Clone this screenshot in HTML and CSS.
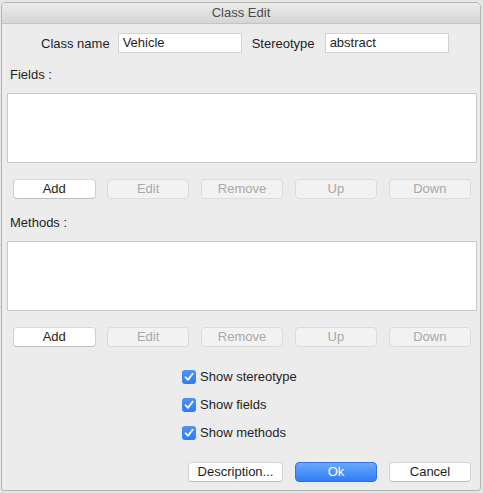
FILE: index.html
```html
<!DOCTYPE html>
<html>
<head>
<meta charset="utf-8">
<link rel="stylesheet" href="styles.css">
</head>
<body>
<div class="window">
  <div class="titlebar">Class Edit</div>
  <div class="content">
    <div class="name-row">
      <span class="lbl">Class name</span>
      <div class="input">Vehicle</div>
      <span class="lbl st">Stereotype</span>
      <div class="input">abstract</div>
    </div>
    <div class="section-label">Fields :</div>
    <div class="listbox"></div>
    <div class="btn-row">
      <div class="btn">Add</div>
      <div class="btn disabled">Edit</div>
      <div class="btn disabled">Remove</div>
      <div class="btn disabled">Up</div>
      <div class="btn disabled">Down</div>
    </div>
    <div class="section-label methods">Methods :</div>
    <div class="listbox"></div>
    <div class="btn-row">
      <div class="btn">Add</div>
      <div class="btn disabled">Edit</div>
      <div class="btn disabled">Remove</div>
      <div class="btn disabled">Up</div>
      <div class="btn disabled">Down</div>
    </div>
    <div class="checks">
      <div class="check"><span class="box"><svg viewBox="0 0 14 14" width="14" height="14"><path d="M3.5 7.2 L6 9.8 L10.6 3.8" fill="none" stroke="#fff" stroke-width="1.8" stroke-linecap="round" stroke-linejoin="round"/></svg></span>Show stereotype</div>
      <div class="check"><span class="box"><svg viewBox="0 0 14 14" width="14" height="14"><path d="M3.5 7.2 L6 9.8 L10.6 3.8" fill="none" stroke="#fff" stroke-width="1.8" stroke-linecap="round" stroke-linejoin="round"/></svg></span>Show fields</div>
      <div class="check"><span class="box"><svg viewBox="0 0 14 14" width="14" height="14"><path d="M3.5 7.2 L6 9.8 L10.6 3.8" fill="none" stroke="#fff" stroke-width="1.8" stroke-linecap="round" stroke-linejoin="round"/></svg></span>Show methods</div>
    </div>
    <div class="bottom-row">
      <div class="btn desc">Description...</div>
      <div class="btn primary">Ok</div>
      <div class="btn">Cancel</div>
    </div>
  </div>
</div>
</body>
</html>
```
FILE: styles.css
```css
html, body {
  margin: 0;
  padding: 0;
}
body {
  background: #e4e6e2;
  width: 483px;
  height: 493px;
  overflow: hidden;
  font-family: "Liberation Sans", Arial, sans-serif;
  font-size: 13px;
  color: #1e1e1e;
}
.window {
  margin: 2px 0 0 1px;
  width: 480px;
  height: 489px;
  box-sizing: border-box;
  border: 1px solid #b4b4b4;
  border-radius: 5px 5px 3px 3px;
  background: #ececec;
  overflow: hidden;
}
.titlebar {
  height: 20px;
  line-height: 20px;
  text-align: center;
  color: #4c4c4c;
  background: linear-gradient(#ebebeb, #d5d5d5);
  border-bottom: 1px solid #c4c4c4;
}
.content {
  padding: 0 5px 0 5px;
}
.name-row {
  display: flex;
  align-items: center;
  gap: 8px;
  padding: 9px 0 0 34px;
  height: 20px;
}
.lbl.st {
  width: 67px;
  text-align: center;
}
.input {
  width: 124px;
  height: 20px;
  box-sizing: border-box;
  background: #fff;
  border: 1px solid #d2d2d2;
  padding: 0 0 0 4px;
  line-height: 18px;
  color: #1e1e1e;
}
.section-label {
  margin: 14px 0 0 3px;
  height: 16px;
  line-height: 16px;
}
.section-label.methods {
  margin-top: 16px;
}
.listbox {
  margin: 10px 0 0 0;
  width: 470px;
  height: 70px;
  box-sizing: border-box;
  background: #fff;
  border: 1px solid #c9c9c9;
}
.btn-row {
  display: grid;
  grid-template-columns: repeat(5, 82.5px);
  column-gap: 11.4px;
  margin: 16px 0 0 6px;
}
.btn {
  height: 20px;
  box-sizing: border-box;
  line-height: 18px;
  text-align: center;
  background: #fff;
  border: 1px solid #cfcfcf;
  border-top-color: #d8d8d8;
  border-bottom-color: #bdbdbd;
  border-radius: 4px;
  color: #1e1e1e;
}
.btn.disabled {
  background: #f2f2f2;
  border-color: #dcdcdc;
  color: #a9a9a9;
}
.checks {
  margin: 23px 0 0 175px;
  display: flex;
  flex-direction: column;
  gap: 14px;
}
.check {
  display: flex;
  align-items: center;
  height: 14px;
  line-height: 14px;
  gap: 4px;
}
.box {
  width: 14px;
  height: 14px;
  border-radius: 3px;
  background: linear-gradient(#4c93fa, #2f7bf3);
  display: block;
}
.box svg {
  display: block;
}
.bottom-row {
  display: flex;
  gap: 12px;
  margin: 22px 0 0 181px;
}
.bottom-row .btn {
  width: 82px;
}
.bottom-row .btn.desc {
  width: 95px;
}
.btn.primary {
  background: linear-gradient(#6aa9fb, #2f7cf5);
  border-color: #2f74e6;
  color: #fff;
}
```
